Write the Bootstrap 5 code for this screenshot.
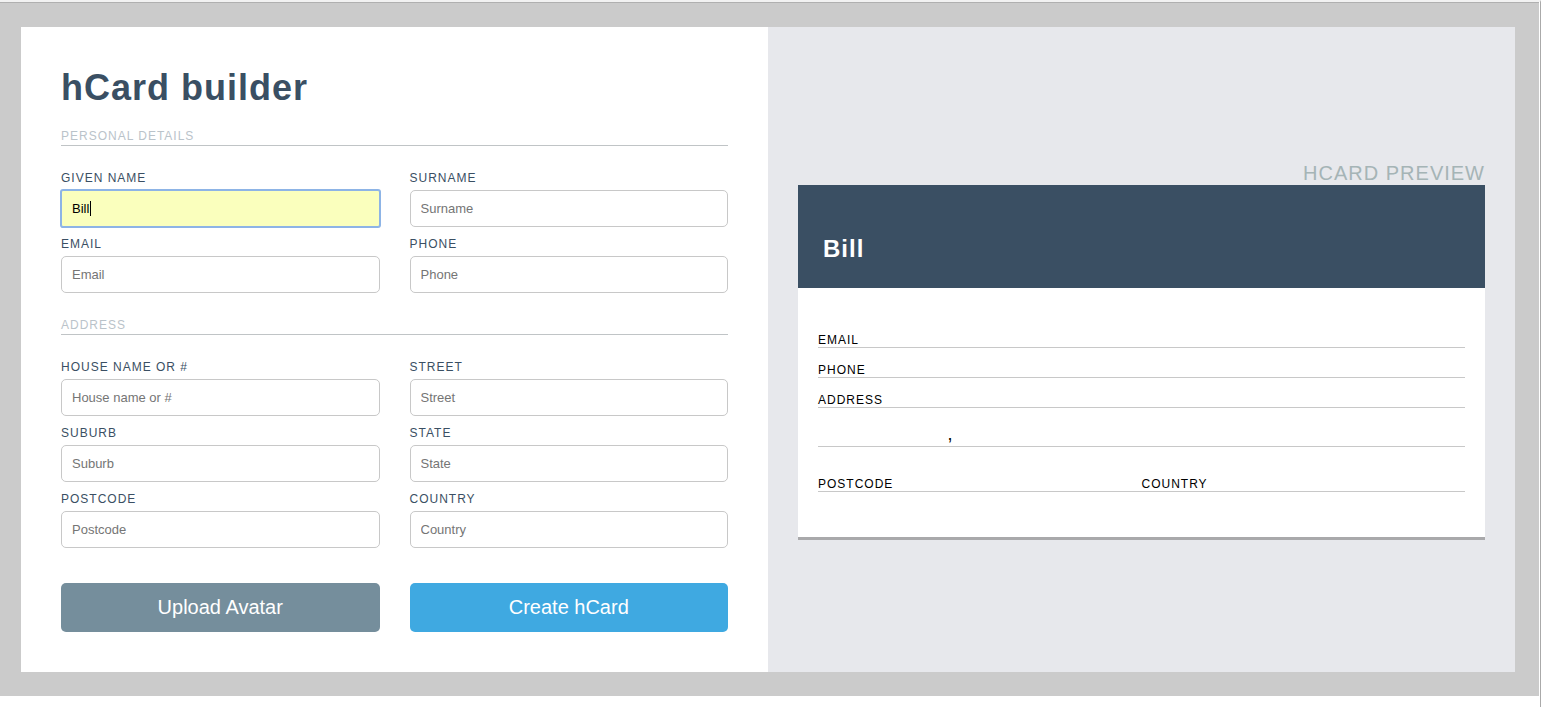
<!DOCTYPE html>
<html lang="en">
<head>
<meta charset="utf-8">
<meta name="viewport" content="width=device-width, initial-scale=1">
<title>hCard builder</title>
<link href="https://cdn.jsdelivr.net/npm/bootstrap@5.3.0/dist/css/bootstrap.min.css" rel="stylesheet">
<style>
  :root { --navy: #3a4f63; --rule: #c8c8c8; }
  body { font-family: "Liberation Sans", Arial, sans-serif; font-size: 16px; color: #000; background: #fff; border-top: 2px solid #f2f2f2; border-right: 1px solid #aaa; }
  .stage { background: #cbcbcb; border-top: 1px solid #b0b0b0; padding: 24px 24px 24px 21px; margin-right: 1px; }
  .builder-pane { background: #fff; padding: 40px; }
  .preview-pane { background: #e7e8ec; padding: 1px 30px 0; }
  h1 { font-size: 36px; line-height: 42px; font-weight: 700; letter-spacing: 1px; color: var(--navy); margin-bottom: 19px; }
  .section-title { font-size: 12px; line-height: 16px; font-weight: 400; letter-spacing: 1px; color: #bac3ca; padding-bottom: 1px; margin-bottom: 24px; border-bottom: 1px solid #c0c4c6; }
  .section-gap { margin-top: 15px; }
  .field-grid { --bs-gutter-x: 30px; }
  .form-label { display: block; font-size: 12px; line-height: 16px; letter-spacing: 1px; color: var(--navy); margin-bottom: 4px; }
  .form-control { height: 37px; padding: 0 10px; font-size: 13px; border: 1px solid #c8c8c8; border-radius: 5px; margin-bottom: 9px; color: #000; }
  .form-control::placeholder { color: #757575; }
  .form-control.filled, .form-control.filled:focus { background: #faffbd; color: #000; border-color: #8db4e6; border-radius: 2px; box-shadow: 0 0 0 1px #8db4e6; }
  .caret { left: 29px; top: 11px; width: 1px; height: 15px; background: #000; }
  .actions { margin-top: 26px; }
  .btn { font-size: 20px; line-height: 23px; color: #fff; border: 0; border-radius: 5px; padding: 13px 12px; }
  .btn-slate { background: #758e9c; }
  .btn-sky { background: #3fa9e1; }
  .btn-slate:hover { background: #67808e; color: #fff; }
  .btn-sky:hover { background: #3198d0; color: #fff; }
  .preview-title { font-size: 20px; line-height: 24px; font-weight: 400; letter-spacing: 1px; color: #a5b4b6; }
  .hcard { background: #fff; border-bottom: 3px solid #a9a9ab; }
  .hcard-head { background: var(--navy); padding: 50px 25px 25px; }
  .hcard-name { font-size: 24px; line-height: 28px; font-weight: 700; letter-spacing: 1px; color: #fff; }
  .hcard-body { padding: 30px 20px 45px; }
  .hcard-line { font-size: 12px; line-height: 14px; letter-spacing: 1px; padding-top: 15px; border-bottom: 1px solid var(--rule); }
  .hcard-locality { font-size: 18px; line-height: 20px; padding: 16px 0 2px; }
  .hcard-suburb { width: 20%; }
  .hcard-last { padding-top: 30px; }
</style>
</head>
<body class="min-vh-100">
<main class="stage">
  <div class="row g-0">
    <form class="col-6 builder-pane">
      <h1>hCard builder</h1>
      <h2 class="section-title">PERSONAL DETAILS</h2>
      <div class="row field-grid">
        <div class="col-6">
          <label class="form-label" for="given">GIVEN NAME</label>
          <div class="position-relative">
            <input class="form-control filled" id="given" type="text" value="Bill">
            <span class="caret position-absolute" aria-hidden="true"></span>
          </div>
        </div>
        <div class="col-6">
          <label class="form-label" for="surname">SURNAME</label>
          <input class="form-control" id="surname" type="text" placeholder="Surname">
        </div>
        <div class="col-6">
          <label class="form-label" for="email">EMAIL</label>
          <input class="form-control" id="email" type="email" placeholder="Email">
        </div>
        <div class="col-6">
          <label class="form-label" for="phone">PHONE</label>
          <input class="form-control" id="phone" type="tel" placeholder="Phone">
        </div>
      </div>
      <h2 class="section-title section-gap">ADDRESS</h2>
      <div class="row field-grid">
        <div class="col-6">
          <label class="form-label" for="house">HOUSE NAME OR #</label>
          <input class="form-control" id="house" type="text" placeholder="House name or #">
        </div>
        <div class="col-6">
          <label class="form-label" for="street">STREET</label>
          <input class="form-control" id="street" type="text" placeholder="Street">
        </div>
        <div class="col-6">
          <label class="form-label" for="suburb">SUBURB</label>
          <input class="form-control" id="suburb" type="text" placeholder="Suburb">
        </div>
        <div class="col-6">
          <label class="form-label" for="state">STATE</label>
          <input class="form-control" id="state" type="text" placeholder="State">
        </div>
        <div class="col-6">
          <label class="form-label" for="postcode">POSTCODE</label>
          <input class="form-control" id="postcode" type="text" placeholder="Postcode">
        </div>
        <div class="col-6">
          <label class="form-label" for="country">COUNTRY</label>
          <input class="form-control" id="country" type="text" placeholder="Country">
        </div>
      </div>
      <div class="row field-grid actions">
        <div class="col-6"><button type="button" class="btn btn-slate d-block w-100">Upload Avatar</button></div>
        <div class="col-6"><button type="button" class="btn btn-sky d-block w-100">Create hCard</button></div>
      </div>
    </form>
    <section class="col-6 preview-pane d-flex flex-column justify-content-center">
      <h2 class="preview-title text-end mb-0">HCARD PREVIEW</h2>
      <article class="hcard">
        <header class="hcard-head"><h3 class="hcard-name mb-0">Bill</h3></header>
        <div class="hcard-body">
          <div class="hcard-line">EMAIL</div>
          <div class="hcard-line">PHONE</div>
          <div class="hcard-line">ADDRESS</div>
          <div class="hcard-line hcard-locality d-flex"><span class="hcard-suburb"></span><span>,</span></div>
          <div class="hcard-line hcard-last d-flex"><span class="w-50">POSTCODE</span><span class="w-50">COUNTRY</span></div>
        </div>
      </article>
    </section>
  </div>
</main>
<script src="https://cdn.jsdelivr.net/npm/bootstrap@5.3.0/dist/js/bootstrap.bundle.min.js"></script>
</body>
</html>
